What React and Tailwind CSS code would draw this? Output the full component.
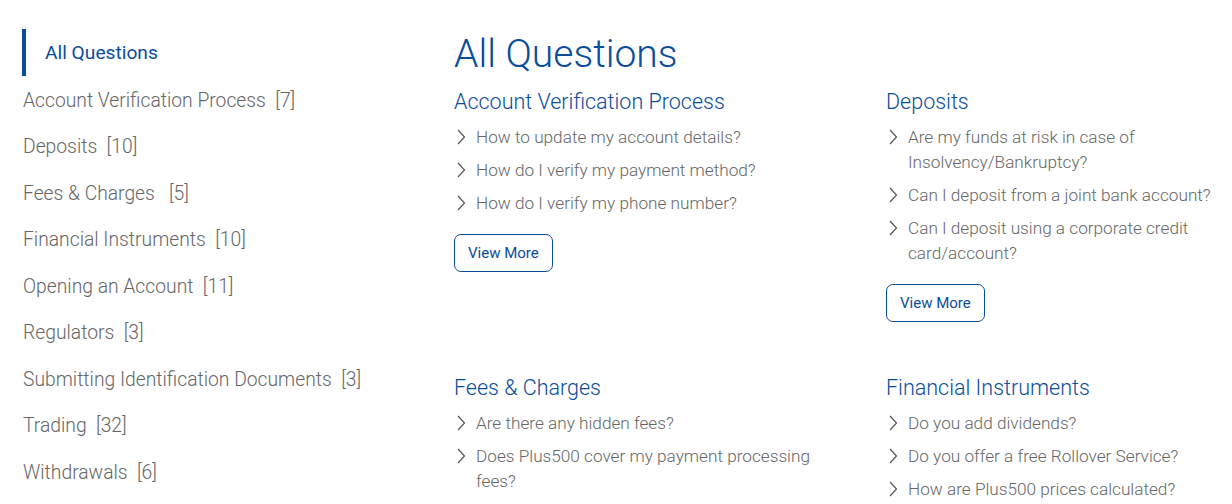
import React from 'react';

const categories = [
  { name: 'Account Verification Process', count: 7 },
  { name: 'Deposits', count: 10 },
  { name: 'Fees & Charges ', count: 5 },
  { name: 'Financial Instruments', count: 10 },
  { name: 'Opening an Account', count: 11 },
  { name: 'Regulators', count: 3 },
  { name: 'Submitting Identification Documents', count: 3 },
  { name: 'Trading', count: 32 },
  { name: 'Withdrawals', count: 6 },
];

const sections = [
  {
    title: 'Account Verification Process',
    questions: [
      'How to update my account details?',
      'How do I verify my payment method?',
      'How do I verify my phone number?',
    ],
    more: true,
  },
  {
    title: 'Deposits',
    questions: [
      'Are my funds at risk in case of Insolvency/Bankruptcy?',
      'Can I deposit from a joint bank account?',
      'Can I deposit using a corporate credit card/account?',
    ],
    more: true,
  },
  {
    title: 'Fees & Charges',
    questions: [
      'Are there any hidden fees?',
      'Does Plus500 cover my payment processing fees?',
    ],
  },
  {
    title: 'Financial Instruments',
    questions: [
      'Do you add dividends?',
      'Do you offer a free Rollover Service?',
      'How are Plus500 prices calculated?',
    ],
  },
];

const Chevron = () => (
  <svg width="10" height="16" viewBox="0 0 10 16" className="shrink-0 mt-[4px]">
    <path d="M2 1 L8.5 8 L2 15" fill="none" stroke="#555" strokeWidth="1.2" />
  </svg>
);

const Section = ({ section }) => (
  <div className="mb-[46px]">
    <h2 className="text-[21.5px] leading-[30px] font-light text-[#0a4d9c] mb-[8px] mt-[5px]">{section.title}</h2>
    <ul className="flex flex-col gap-[8px]">
      {section.questions.map((q) => (
        <li key={q} className="flex gap-[10px] pl-[2px] text-[17.2px] leading-[25px] font-light text-[#666]">
          <Chevron />
          <span>{q}</span>
        </li>
      ))}
    </ul>
    {section.more && (
      <button className="mt-[18px] h-[38px] px-[13px] rounded-[7px] border border-[#0a4d9c] text-[#0a4d9c] text-[15px] bg-white">
        View More
      </button>
    )}
  </div>
);

const App = () => {
  return (
    <div className="w-[1232px] h-[504px] overflow-hidden bg-white flex" style={{ fontFamily: 'Roboto, "Liberation Sans", sans-serif' }}>
      <aside className="w-[454px] shrink-0 pl-[22px] pt-[29px]">
        <div className="border-l-4 border-[#0a4d9c] h-[47px] flex items-center pl-[19px] pt-[2px] text-[19.2px] text-[#0a4d9c]">
          All Questions
        </div>
        <ul className="mt-[2px]">
          {categories.map((c) => (
            <li key={c.name} className="h-[46.5px] flex items-center pl-[1px] text-[19.3px] font-light text-[#666] whitespace-pre">
              {c.name}  [{c.count}]
            </li>
          ))}
        </ul>
      </aside>
      <main className="flex-1 pt-[31px] pr-[10px]">
        <h1 className="text-[39px] leading-[46px] font-light text-[#0a4d9c] mb-[5px]">All Questions</h1>
        <div className="grid grid-cols-[390px_1fr] gap-x-[42px]">
          {sections.map((s) => (
            <Section key={s.title} section={s} />
          ))}
        </div>
      </main>
    </div>
  );
};

export default App;
